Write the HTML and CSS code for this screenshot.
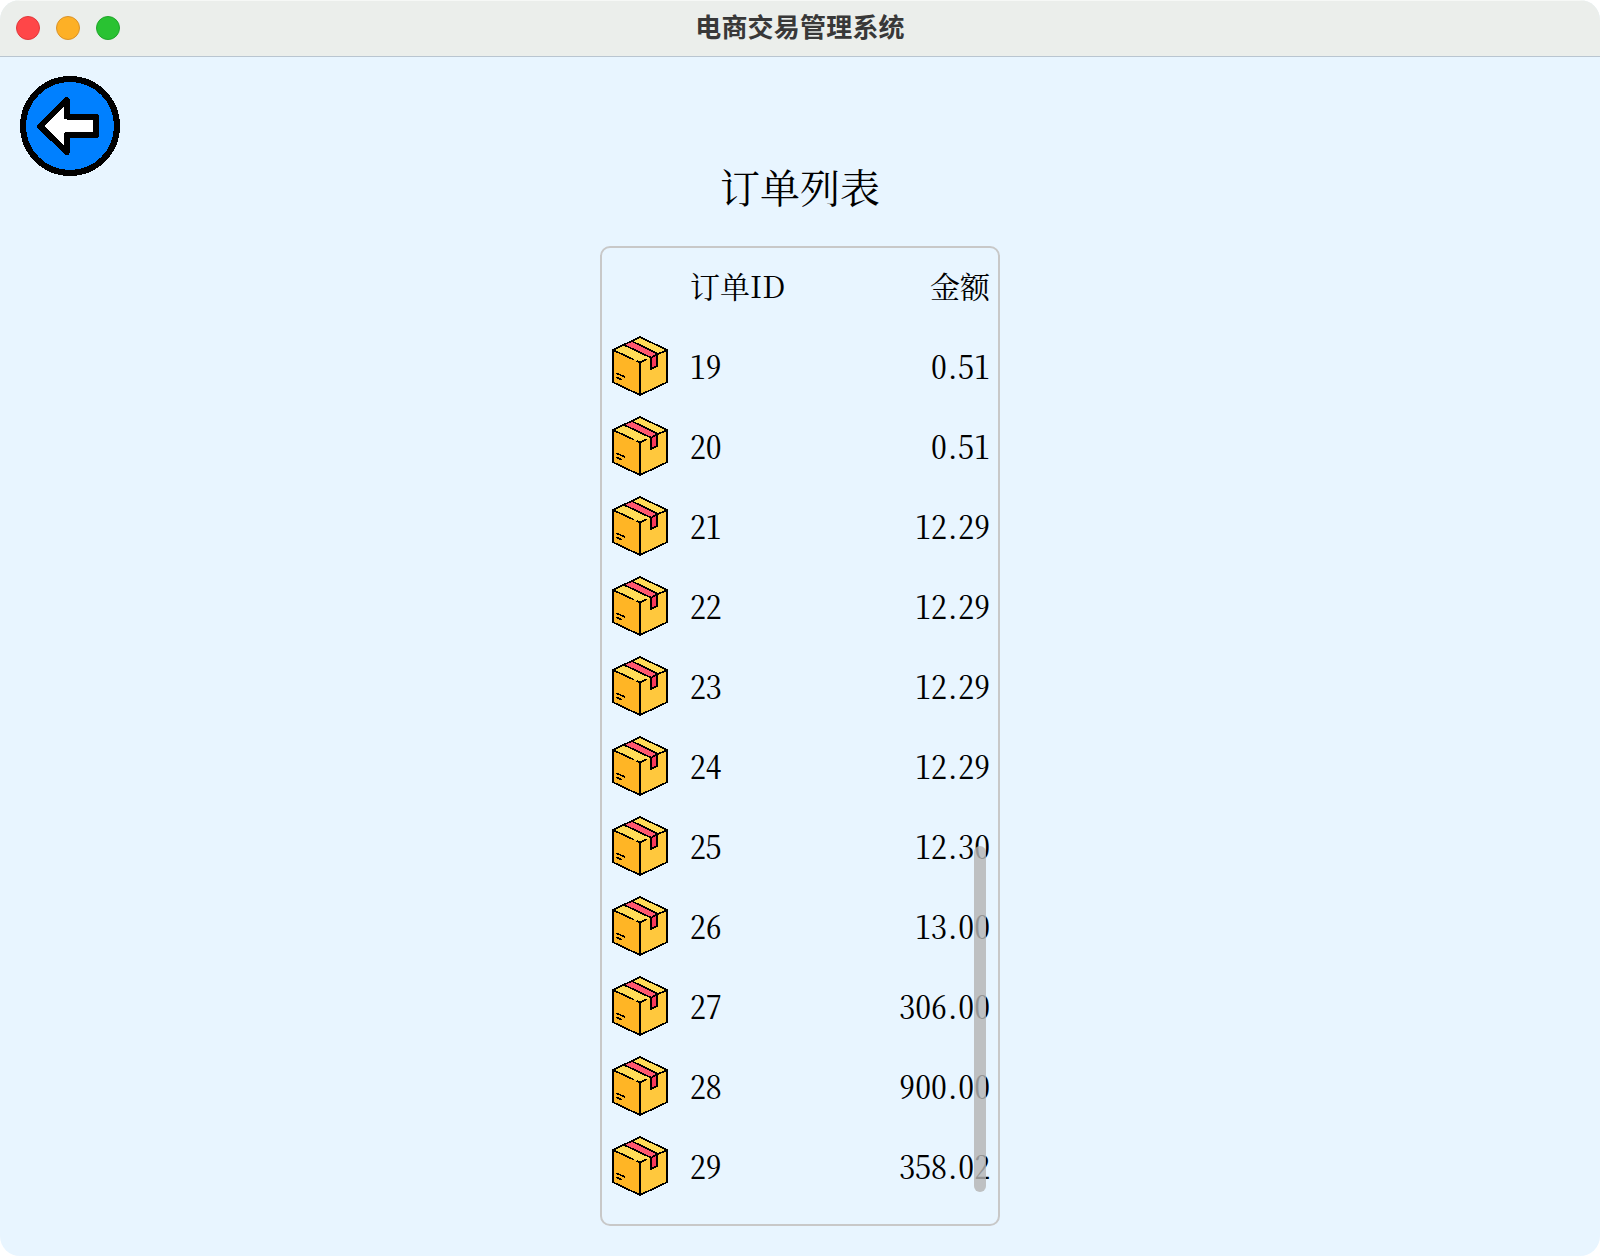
FILE: index.html
```html
<!DOCTYPE html>
<html lang="zh-CN">
<head>
<meta charset="utf-8">
<title>电商交易管理系统</title>
<link rel="stylesheet" href="styles.css">
</head>
<body>
<div class="window">
  <header class="titlebar">
    <div class="lights"><i class="light close"></i><i class="light minimize"></i><i class="light zoom"></i></div>
    <h1 class="title">电商交易管理系统</h1>
  </header>
  <main class="content">
    <button class="back" aria-label="返回">
      <svg width="100" height="100" viewBox="0 0 100 100" shape-rendering="crispEdges">
        <circle cx="50" cy="50" r="47" fill="#0080ff" stroke="#000" stroke-width="6"/>
        <path d="M20 50.3 46.8 24v16.5H76v18.8H46.8V76Z" fill="#fff" stroke="#000" stroke-width="6" stroke-linejoin="round"/>
      </svg>
    </button>
    <h2 class="heading">订单列表</h2>
    <section class="panel">
      <div class="row head"><span></span><span class="label">订单ID</span><span class="label amount">金额</span></div>
      <div class="rows" id="rows"></div>
      <div class="scrollbar"></div>
    </section>
  </main>
</div>
<template id="row">
  <div class="row">
    <svg class="box" width="60" height="60" viewBox="0 0 60 60" shape-rendering="crispEdges">
      <path d="M3 14 30 26.5V59L3 46.3Z" fill="#ffb525"/>
      <path d="M57 14 30 26.5V59L57 46.3Z" fill="#ffc83d"/>
      <path d="M30 1 57 14 30 26.5 3 14Z" fill="#ffdb57"/>
      <path d="M14 8.7 21.5 5 48 17.6 41.3 21.8Z" fill="#ff5870"/>
      <path d="M41.3 21.2 47.3 18V30L41.3 32.7Z" fill="#f8395a"/>
      <g fill="none" stroke="#000" stroke-width="1.7">
        <path d="M24 23.7 3 14V46.3L30 59 57 46.3V14L30 1 3 14M57 14 47 18.6M30 59V26.5L26.5 25M30 26.5 37 23.3"/>
        <path d="M14 8.9 41.3 21.8V32.7L47.3 30V17.6L21.5 5M41.3 21.6 48 18M6.5 37.2 15 41M6.5 41.4 11.5 43.6"/>
      </g>
    </svg>
    <span class="number id"></span><span class="number amount"><span class="whole"></span><span class="point">.</span><span class="cents"></span></span>
  </div>
</template>
<script src="orders.js"></script>
</body>
</html>
```
FILE: styles.css
```css
* { box-sizing: border-box; }
body { margin: 0; background: #fff; color: #000; font-family: "Noto Serif CJK SC", "Source Han Serif SC", "Liberation Serif", "Noto Sans CJK SC", serif; }
.window { height: 1256px; border-radius: 20px; overflow: hidden; background: #e8f5ff; display: flex; flex-direction: column; }
.titlebar { height: 57px; flex: none; display: grid; grid-template-columns: 1fr auto 1fr; align-items: center; background: #ebeeeb; border-top: 1px solid #f6f8f6; border-bottom: 1px solid #b9c5d0; }
.lights { display: flex; gap: 16px; padding: 0 0 1px 16px; }
.light { width: 24px; height: 24px; border-radius: 50%; border: 1px solid; }
.close { background: #ff4648; border-color: #e0383c; }
.minimize { background: #fdb026; border-color: #d9922a; }
.zoom { background: #29c232; border-color: #1fa52a; }
.title { margin: 0; font: 700 26px/38px "Noto Sans CJK SC", sans-serif; letter-spacing: .2px; color: #383838; padding-bottom: 5px; }
.content { display: flex; flex-direction: column; align-items: center; }
.back { align-self: flex-start; margin: 19px 0 0 20px; padding: 0; border: 0; background: none; height: 100px; }
.back svg { display: block; }
.heading { margin: -20px 0 0; font-weight: 400; font-size: 40px; line-height: 60px; }
.panel { position: relative; margin-top: 30px; width: 400px; height: 980px; border: 2px solid #c8c8c8; border-radius: 10px; }
.row { height: 80px; display: grid; grid-template-columns: 60px 1fr auto; column-gap: 20px; align-items: center; padding: 0 8px; }
.box { margin-top: -4px; }
.label, .number { font-size: 30px; line-height: 44px; padding-bottom: 6px; }
.number { font-size: 31.7px; padding-bottom: 5px; font-feature-settings: "hwid" 1; }
.number.amount { display: flex; }
.point { margin: 0 -2.2px; }
.scrollbar { position: absolute; right: 12px; top: 598px; width: 12px; height: 346px; border-radius: 6px; background: rgba(181, 181, 181, .82); }
```
FILE: orders.js
```js
const orders = [
  [19, "0.51"], [20, "0.51"], [21, "12.29"], [22, "12.29"], [23, "12.29"], [24, "12.29"],
  [25, "12.30"], [26, "13.00"], [27, "306.00"], [28, "900.00"], [29, "358.02"]
];
const template = document.getElementById("row");
const rows = document.getElementById("rows");
for (const [id, amount] of orders) {
  const row = template.content.cloneNode(true);
  const [whole, cents] = amount.split(".");
  row.querySelector(".id").textContent = id;
  row.querySelector(".whole").textContent = whole;
  row.querySelector(".cents").textContent = cents;
  rows.append(row);
}
```
